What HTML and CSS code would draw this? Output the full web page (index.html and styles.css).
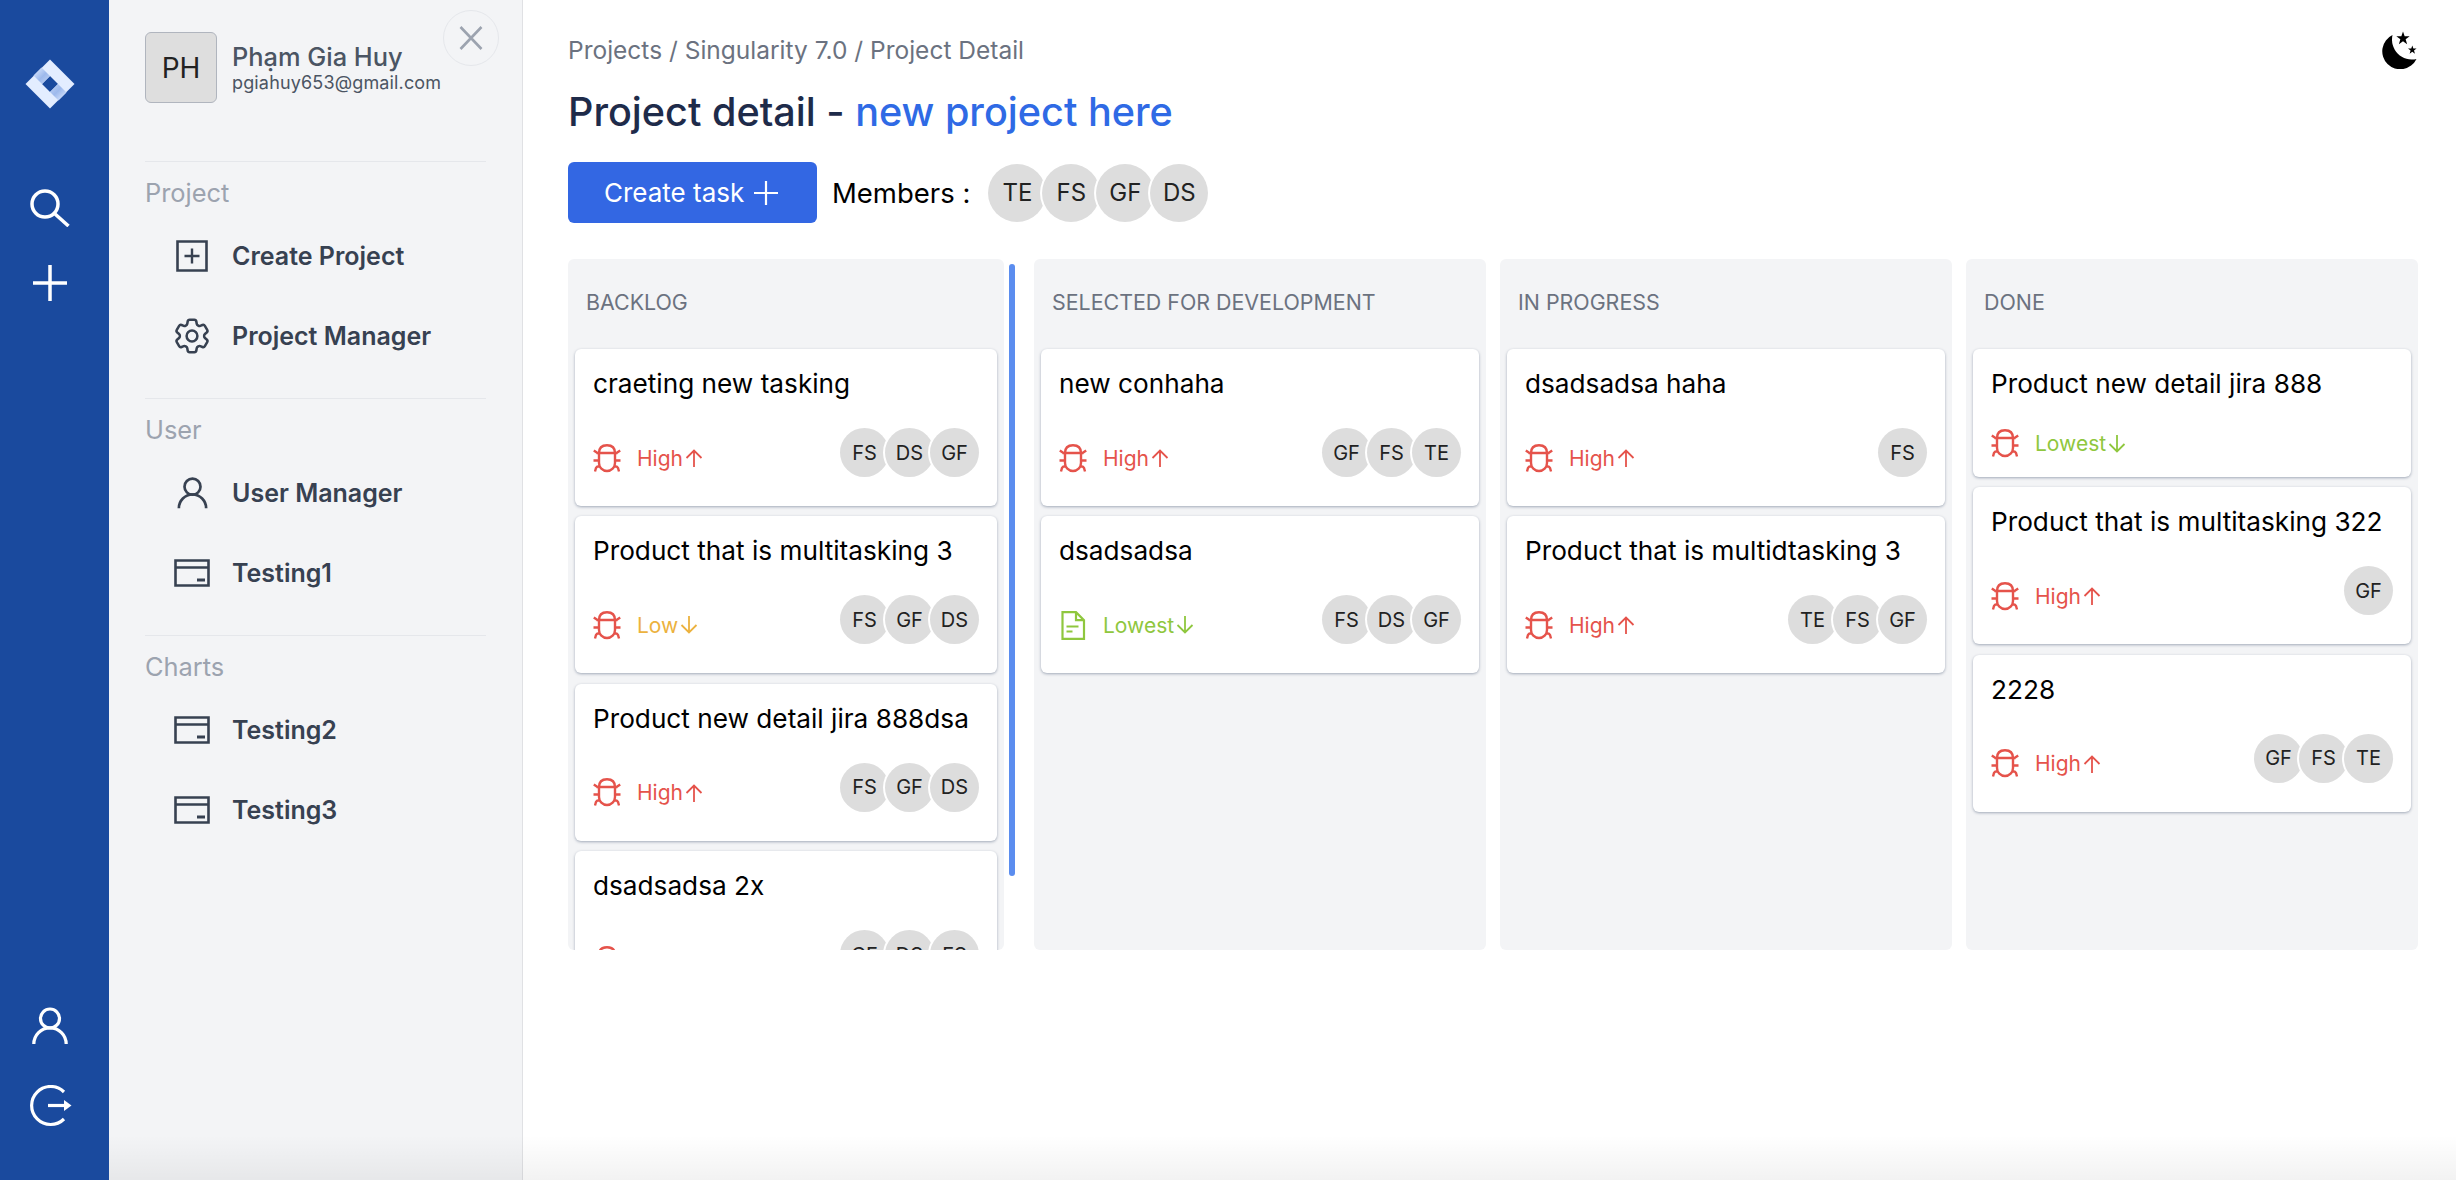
FILE: index.html
```html
<!DOCTYPE html>
<html lang="en">
<head>
    <meta charset="UTF-8">
    <meta name="viewport" content="width=device-width, initial-scale=1.0">
    <title>Project detail</title>
    <link rel="stylesheet" href="styles.css">
</head>
<body>
    <svg class="defs" aria-hidden="true">
        <defs>
            <linearGradient id="fold" x1="0" y1="0" x2="1" y2="1">
                <stop offset="0" stop-color="#e3edff"/>
                <stop offset="0.55" stop-color="#9db9ec"/>
                <stop offset="1" stop-color="#c3d5f5"/>
            </linearGradient>
            <symbol id="i-user" viewBox="0 0 36 38">
                <circle cx="18" cy="11.5" r="9.5" fill="none" stroke="currentColor" stroke-width="3.2"/>
                <path d="M1.8 37a16.2 16.2 0 0 1 32.4 0" fill="none" stroke="currentColor" stroke-width="3.2"/>
            </symbol>
            <symbol id="i-card" viewBox="0 0 36 28">
                <path d="M1.5 1.5h33v25h-33z M1.5 8.5h33" fill="none" stroke="currentColor" stroke-width="2.6"/>
                <path d="M23 21h8" fill="none" stroke="currentColor" stroke-width="3"/>
            </symbol>
            <symbol id="i-bug" viewBox="0 0 28 29">
                <path d="M6 9C6 3.6 9 1.2 14 1.2S22 3.6 22 9 M3.5 9h21 M6 9v10a8 8 0 0 0 16 0V9 M.8 6.5 6 10 M27.2 6.5 22 10 M.5 16.5H6 M27.5 16.5H22 M2 27.5l1-3.5q.6-1.6 3-1.8 M26 27.5l-1-3.5q-.6-1.6-3-1.8" fill="none" stroke="currentColor" stroke-width="2.4"/>
            </symbol>
            <symbol id="i-doc" viewBox="0 0 28 29">
                <path d="M3.5 1.2H17L25 9.2V27.8H3.5z M17 1.2v8h8 M7.5 15.5h12 M7.5 20.5h6" fill="none" stroke="currentColor" stroke-width="2.2"/>
            </symbol>
            <symbol id="i-up" viewBox="0 0 18 18">
                <path d="M9 18V1.5 M1.5 9 9 1.5 16.5 9" fill="none" stroke="currentColor" stroke-width="1.8"/>
            </symbol>
            <symbol id="i-down" viewBox="0 0 18 18">
                <path d="M9 0v16.5 M1.5 9 9 16.5 16.5 9" fill="none" stroke="currentColor" stroke-width="1.8"/>
            </symbol>
        </defs>
    </svg>

    <div class="app">
        <nav class="rail">
            <svg class="rail-logo" width="50" height="50" viewBox="0 0 50 50">
                <path fill="#e3edff" fill-rule="evenodd" d="M25 .5 49.5 25 25 49.5 .5 25z M25 17 17 25 25 33 33 25z"/>
                <path fill="url(#fold)" d="M8.5 16.5 16.5 8.5 25 17 17 25z"/>
                <path fill="url(#fold)" transform="rotate(180 25 25)" d="M8.5 16.5 16.5 8.5 25 17 17 25z"/>
            </svg>
            <svg class="rail-search" width="40" height="38" viewBox="0 0 40 38">
                <circle cx="15" cy="15" r="13" fill="none" stroke="#fff" stroke-width="3.5"/>
                <path d="M24.5 24.5 38.5 37" fill="none" stroke="#fff" stroke-width="3.5"/>
            </svg>
            <svg class="rail-plus" width="34" height="36" viewBox="0 0 34 36">
                <path d="M17 0v36 M0 18h34" fill="none" stroke="#fff" stroke-width="3.5"/>
            </svg>
            <svg class="rail-account" width="36" height="38"><use href="#i-user"/></svg>
            <svg class="rail-logout" width="44" height="42" viewBox="0 0 44 42">
                <path d="M36 7A19 19 0 1 0 36 34" fill="none" stroke="#fff" stroke-width="3.2"/>
                <path d="M20 20.5h17" fill="none" stroke="#fff" stroke-width="3.2"/>
                <path d="M36 15l7.5 5.5-7.5 5.5z" fill="#fff"/>
            </svg>
        </nav>

        <aside class="side">
            <button class="side-close">
                <svg width="24" height="24" viewBox="0 0 24 24">
                    <path d="M1.5 1 22.5 23 M22.5 1 1.5 23" fill="none" stroke="currentColor" stroke-width="2.6"/>
                </svg>
            </button>
            <div class="profile">
                <div class="profile-pic">PH</div>
                <div>
                    <div class="profile-name">Phạm Gia Huy</div>
                    <div class="profile-mail">pgiahuy653@gmail.com</div>
                </div>
            </div>

            <section class="side-group">
                <div class="side-label">Project</div>
                <a class="side-item">
                    <span class="side-icon">
                        <svg width="32" height="32" viewBox="0 0 32 32">
                            <path d="M1.5 1.5h29v29h-29z" fill="none" stroke="currentColor" stroke-width="2.6"/>
                            <path d="M16 8.5v15 M8.5 16h15" fill="none" stroke="currentColor" stroke-width="2.4"/>
                        </svg>
                    </span>
                    Create Project
                </a>
                <a class="side-item">
                    <span class="side-icon">
                        <svg width="38" height="38" viewBox="2 2 20 20" fill="none" stroke="currentColor" stroke-width="1.4">
                            <path d="M9.594 3.94c.09-.542.56-.94 1.11-.94h2.593c.55 0 1.02.398 1.11.94l.213 1.281c.063.374.313.686.645.87.074.04.147.083.22.127.324.196.72.257 1.075.124l1.217-.456a1.125 1.125 0 011.37.49l1.296 2.247a1.125 1.125 0 01-.26 1.431l-1.003.827c-.293.24-.438.613-.431.992a6.759 6.759 0 010 .255c-.007.378.138.75.43.99l1.005.828c.424.35.534.954.26 1.43l-1.298 2.247a1.125 1.125 0 01-1.369.491l-1.217-.456c-.355-.133-.75-.072-1.076.124a6.57 6.57 0 01-.22.128c-.331.183-.581.495-.644.869l-.213 1.28c-.09.543-.56.941-1.11.941h-2.594c-.55 0-1.02-.398-1.11-.94l-.213-1.281c-.062-.374-.312-.686-.644-.87a6.52 6.52 0 01-.22-.127c-.325-.196-.72-.257-1.076-.124l-1.217.456a1.125 1.125 0 01-1.369-.49l-1.297-2.247a1.125 1.125 0 01.26-1.431l1.004-.827c.292-.24.437-.613.43-.992a6.932 6.932 0 010-.255c.007-.378-.138-.75-.43-.99l-1.004-.828a1.125 1.125 0 01-.26-1.43l1.297-2.247a1.125 1.125 0 011.37-.491l1.216.456c.356.133.751.072 1.076-.124.072-.044.146-.087.22-.128.332-.183.582-.495.644-.869l.214-1.281z"/>
                            <circle cx="12" cy="12" r="3"/>
                        </svg>
                    </span>
                    Project Manager
                </a>
            </section>

            <section class="side-group">
                <div class="side-label">User</div>
                <a class="side-item">
                    <span class="side-icon"><svg width="31" height="32"><use href="#i-user"/></svg></span>
                    User Manager
                </a>
                <a class="side-item">
                    <span class="side-icon"><svg width="36" height="28"><use href="#i-card"/></svg></span>
                    Testing1
                </a>
            </section>

            <section class="side-group">
                <div class="side-label">Charts</div>
                <a class="side-item">
                    <span class="side-icon"><svg width="36" height="28"><use href="#i-card"/></svg></span>
                    Testing2
                </a>
                <a class="side-item">
                    <span class="side-icon"><svg width="36" height="28"><use href="#i-card"/></svg></span>
                    Testing3
                </a>
            </section>
        </aside>

        <main class="main">
            <div class="topline">
                <div class="crumbs">Projects / Singularity 7.0 / Project Detail</div>
                <svg class="moon" width="36" height="38" viewBox="0 -2 36 38">
                    <path d="M10.5 2A18 18 0 1 0 34.5 26 20 20 0 0 1 10.5 2z"/>
                    <polygon points="21,-1.5 22.65,3.23 27.66,3.34 23.66,6.37 25.12,11.16 21,8.3 16.88,11.16 18.34,6.37 14.34,3.34 19.35,3.23"/>
                    <polygon points="30.3,12.5 31.36,15.54 34.58,15.61 32.01,17.56 32.95,20.64 30.3,18.8 27.65,20.64 28.59,17.56 26.02,15.61 29.24,15.54"/>
                </svg>
            </div>
            <h1 class="page-title">Project detail - <span class="page-title-name">new project here</span></h1>
            <div class="toolbar">
                <button class="btn-create">
                    Create task
                    <svg width="24" height="24" viewBox="0 0 24 24">
                        <path d="M12 0v24 M0 12h24" fill="none" stroke="#fff" stroke-width="2.2"/>
                    </svg>
                </button>
                <span class="members-label">Members :</span>
                <div class="avatars avatars-lg">
                    <span class="avatar">TE</span><span class="avatar">FS</span><span class="avatar">GF</span><span class="avatar">DS</span>
                </div>
            </div>

            <div class="board">
                <div class="column-wrap">
                    <div class="column column-clip">
                        <div class="column-head">BACKLOG</div>
                        <div class="task">
                            <div class="task-title">craeting new tasking</div>
                            <div class="task-foot">
                                <div class="task-meta high"><svg class="task-type" width="28" height="29"><use href="#i-bug"/></svg>High<svg class="task-arrow" width="18" height="18"><use href="#i-up"/></svg></div>
                                <div class="avatars"><span class="avatar">FS</span><span class="avatar">DS</span><span class="avatar">GF</span></div>
                            </div>
                        </div>
                        <div class="task">
                            <div class="task-title">Product that is multitasking 3</div>
                            <div class="task-foot">
                                <div class="task-meta low"><svg class="task-type bug" width="28" height="29"><use href="#i-bug"/></svg>Low<svg class="task-arrow" width="18" height="18"><use href="#i-down"/></svg></div>
                                <div class="avatars"><span class="avatar">FS</span><span class="avatar">GF</span><span class="avatar">DS</span></div>
                            </div>
                        </div>
                        <div class="task">
                            <div class="task-title">Product new detail jira 888dsa</div>
                            <div class="task-foot">
                                <div class="task-meta high"><svg class="task-type" width="28" height="29"><use href="#i-bug"/></svg>High<svg class="task-arrow" width="18" height="18"><use href="#i-up"/></svg></div>
                                <div class="avatars"><span class="avatar">FS</span><span class="avatar">GF</span><span class="avatar">DS</span></div>
                            </div>
                        </div>
                        <div class="task">
                            <div class="task-title">dsadsadsa 2x</div>
                            <div class="task-foot">
                                <div class="task-meta high"><svg class="task-type" width="28" height="29"><use href="#i-bug"/></svg>High<svg class="task-arrow" width="18" height="18"><use href="#i-up"/></svg></div>
                                <div class="avatars"><span class="avatar">GF</span><span class="avatar">DS</span><span class="avatar">FS</span></div>
                            </div>
                        </div>
                    </div>
                    <div class="scrollbar"><div class="scrollbar-thumb"></div></div>
                </div>

                <div class="column">
                    <div class="column-head">SELECTED FOR DEVELOPMENT</div>
                    <div class="task">
                        <div class="task-title">new conhaha</div>
                        <div class="task-foot">
                            <div class="task-meta high"><svg class="task-type" width="28" height="29"><use href="#i-bug"/></svg>High<svg class="task-arrow" width="18" height="18"><use href="#i-up"/></svg></div>
                            <div class="avatars"><span class="avatar">GF</span><span class="avatar">FS</span><span class="avatar">TE</span></div>
                        </div>
                    </div>
                    <div class="task">
                        <div class="task-title">dsadsadsa</div>
                        <div class="task-foot">
                            <div class="task-meta lowest"><svg class="task-type" width="28" height="29"><use href="#i-doc"/></svg>Lowest<svg class="task-arrow" width="18" height="18"><use href="#i-down"/></svg></div>
                            <div class="avatars"><span class="avatar">FS</span><span class="avatar">DS</span><span class="avatar">GF</span></div>
                        </div>
                    </div>
                </div>

                <div class="column">
                    <div class="column-head">IN PROGRESS</div>
                    <div class="task">
                        <div class="task-title">dsadsadsa haha</div>
                        <div class="task-foot">
                            <div class="task-meta high"><svg class="task-type" width="28" height="29"><use href="#i-bug"/></svg>High<svg class="task-arrow" width="18" height="18"><use href="#i-up"/></svg></div>
                            <div class="avatars"><span class="avatar">FS</span></div>
                        </div>
                    </div>
                    <div class="task">
                        <div class="task-title">Product that is multidtasking 3</div>
                        <div class="task-foot">
                            <div class="task-meta high"><svg class="task-type" width="28" height="29"><use href="#i-bug"/></svg>High<svg class="task-arrow" width="18" height="18"><use href="#i-up"/></svg></div>
                            <div class="avatars"><span class="avatar">TE</span><span class="avatar">FS</span><span class="avatar">GF</span></div>
                        </div>
                    </div>
                </div>

                <div class="column">
                    <div class="column-head">DONE</div>
                    <div class="task">
                        <div class="task-title">Product new detail jira 888</div>
                        <div class="task-foot">
                            <div class="task-meta lowest"><svg class="task-type bug" width="28" height="29"><use href="#i-bug"/></svg>Lowest<svg class="task-arrow" width="18" height="18"><use href="#i-down"/></svg></div>
                        </div>
                    </div>
                    <div class="task">
                        <div class="task-title">Product that is multitasking 322</div>
                        <div class="task-foot">
                            <div class="task-meta high"><svg class="task-type" width="28" height="29"><use href="#i-bug"/></svg>High<svg class="task-arrow" width="18" height="18"><use href="#i-up"/></svg></div>
                            <div class="avatars"><span class="avatar">GF</span></div>
                        </div>
                    </div>
                    <div class="task">
                        <div class="task-title">2228</div>
                        <div class="task-foot">
                            <div class="task-meta high"><svg class="task-type" width="28" height="29"><use href="#i-bug"/></svg>High<svg class="task-arrow" width="18" height="18"><use href="#i-up"/></svg></div>
                            <div class="avatars"><span class="avatar">GF</span><span class="avatar">FS</span><span class="avatar">TE</span></div>
                        </div>
                    </div>
                </div>
            </div>
        </main>
        <div class="bottom-fade"></div>
    </div>
</body>
</html>
```

FILE: styles.css
```css
* {
    box-sizing: border-box;
}
body {
    margin: 0;
    font-family: Inter, "Noto Sans", sans-serif;
    background-color: #fff;
}
.defs {
    position: absolute;
    width: 0;
    height: 0;
}
.app {
    position: relative;
    display: flex;
    height: 1180px;
    overflow: hidden;
}

/* blue icon rail */
.rail {
    width: 109px;
    flex: none;
    display: flex;
    flex-direction: column;
    align-items: center;
    padding: 59px 9px 53px 0;
    background-color: #1a4a9e;
    color: #fff;
}
.rail-search {
    margin-top: 80px;
}
.rail-plus {
    margin-top: 38px;
}
.rail-account {
    margin-top: auto;
}
.rail-logout {
    margin-top: 40px;
}

/* sidebar */
.side {
    position: relative;
    width: 414px;
    flex: none;
    padding: 32px 36px 0;
    background-color: #f3f4f6;
    border-right: 1px solid #e0e1e4;
}
.side-close {
    position: absolute;
    top: 10px;
    left: 334px;
    width: 56px;
    height: 56px;
    display: flex;
    align-items: center;
    justify-content: center;
    padding: 0;
    background: none;
    border: 1px solid #e5e7eb;
    border-radius: 50%;
    color: #9ca3af;
}
.profile {
    display: flex;
    align-items: center;
    gap: 15px;
    height: 71px;
}
.profile-pic {
    width: 72px;
    height: 71px;
    display: flex;
    align-items: center;
    justify-content: center;
    background-color: #dedede;
    border: 1px solid #b0b5be;
    border-radius: 6px;
    font-size: 28px;
    color: #222;
}
.profile-name {
    font-size: 25.4px;
    line-height: 30px;
    font-weight: 500;
    color: #4b5563;
}
.profile-mail {
    font-size: 18px;
    line-height: 22px;
    letter-spacing: 0.15px;
    color: #4b5563;
}
.side-group {
    border-top: 1px solid #e5e7eb;
    padding-bottom: 22px;
}
.profile + .side-group {
    margin-top: 58px;
}
.side-label {
    padding: 16px 0 8px;
    font-size: 25.4px;
    line-height: 30px;
    color: #9ca3af;
}
.side-item {
    display: flex;
    align-items: center;
    gap: 22px;
    height: 80px;
    padding-left: 29px;
    font-size: 25px;
    font-weight: 600;
    color: #374151;
}
.side-icon {
    width: 36px;
    display: flex;
    justify-content: center;
}

/* main */
.main {
    flex: 1;
    min-width: 0;
    padding: 32px 38px 0 45px;
}
.topline {
    display: flex;
    align-items: center;
    justify-content: space-between;
    height: 36px;
}
.crumbs {
    font-size: 24.5px;
    color: #6b7280;
}
.page-title {
    margin: 19px 0 0;
    font-size: 39.6px;
    line-height: 50px;
    font-weight: 500;
    color: #1e2b4a;
}
.page-title-name {
    color: #2f6ae5;
}
.toolbar {
    display: flex;
    align-items: center;
    margin-top: 25px;
    height: 61px;
}
.btn-create {
    display: flex;
    align-items: center;
    gap: 10px;
    height: 61px;
    width: 249px;
    padding: 0 0 0 36px;
    background-color: #3367e3;
    color: #fff;
    border: none;
    border-radius: 6px;
    font-family: inherit;
    font-size: 26px;
}
.members-label {
    margin: 0 18px 0 15px;
    font-size: 27.5px;
    color: #000;
}
.avatars {
    display: flex;
    flex: none;
}
.avatar {
    width: 49px;
    height: 49px;
    display: flex;
    align-items: center;
    justify-content: center;
    margin-left: -4px;
    background-color: #ddd;
    border-radius: 50%;
    box-shadow: 0 0 0 2px #fff;
    font-size: 20px;
    color: #222;
}
.avatar:first-child {
    margin-left: 0;
}
.avatars-lg .avatar {
    width: 58px;
    height: 58px;
    font-size: 24px;
}

/* board */
.board {
    display: flex;
    gap: 14px;
    margin-top: 36px;
    height: 691px;
}
.column-wrap {
    width: 452px;
    flex: none;
    display: flex;
}
.column {
    width: 452px;
    flex: none;
    padding: 0 7px;
    background-color: #f3f4f6;
    border-radius: 6px;
}
.column-clip {
    width: 436px;
    overflow: hidden;
}
.scrollbar {
    width: 16px;
    flex: none;
    padding: 5px 5px 0;
}
.scrollbar-thumb {
    height: 612px;
    background-color: #5b8def;
    border-radius: 3px;
}
.column-head {
    height: 90px;
    padding: 28px 0 0 11px;
    font-size: 21.4px;
    line-height: 30px;
    color: #6b7280;
}
.task {
    margin-bottom: 10.4px;
    padding: 15px 18px;
    background-color: #fff;
    border-radius: 6px;
    box-shadow: 0 1px 3px rgba(9, 30, 66, 0.35);
}
.task-title {
    height: 40px;
    margin-bottom: 24px;
    font-size: 26.2px;
    line-height: 40px;
    color: #000;
    white-space: nowrap;
}
.task-foot {
    display: flex;
    align-items: center;
    justify-content: space-between;
}
.task-foot .avatars {
    padding-bottom: 14px;
}
.task-meta {
    display: flex;
    align-items: center;
    height: 34px;
    padding-bottom: 3px;
    font-size: 21px;
}
.task-type {
    margin-right: 16px;
}
.task-arrow {
    margin-left: 2px;
}
.high {
    color: #e5534b;
}
.low {
    color: #ecb23e;
}
.lowest {
    color: #8fc73e;
}
.task-type.bug {
    color: #e5534b;
}

.bottom-fade {
    position: absolute;
    left: 109px;
    right: 0;
    bottom: 0;
    height: 45px;
    background: linear-gradient(to bottom, rgba(0, 0, 0, 0), rgba(0, 0, 0, 0.05));
    pointer-events: none;
}
```
